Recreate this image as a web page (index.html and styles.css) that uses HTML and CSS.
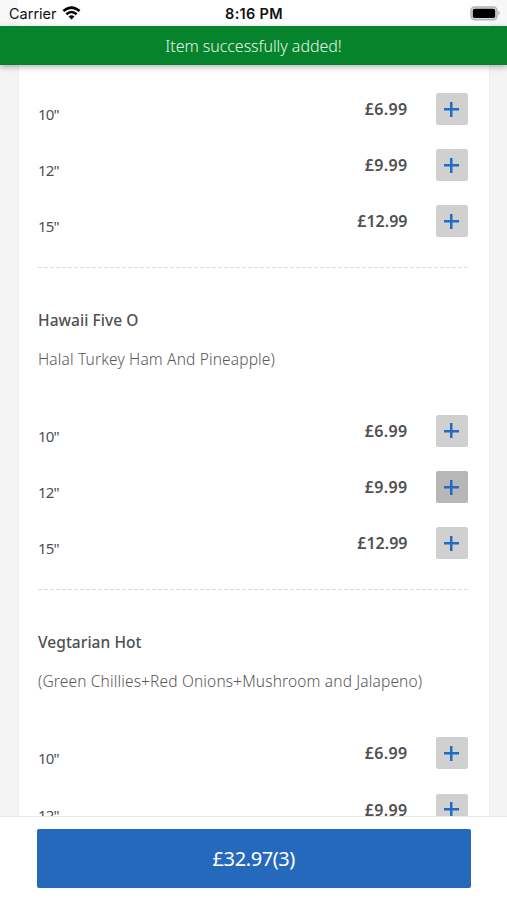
FILE: index.html
```html
<!DOCTYPE html>
<html lang="en">
<head>
<meta charset="utf-8">
<title>Menu</title>
<link rel="stylesheet" href="styles.css">
</head>
<body>
<div class="screen">
  <header class="status">
    <div class="carrier"><span class="carrier-name">Carrier</span>
      <svg class="wifi" viewBox="0 0 20 15"><g fill="none" stroke="#000" stroke-width="2.7"><path d="M1.3 5.4Q10-2 18.7 5.4"/><path d="M4.5 8.8Q10 4 15.5 8.8"/></g><path d="M6.9 11.2Q10 8.6 13.1 11.2L10 14.5Z"/></svg>
    </div>
    <div class="clock">8:16 PM</div>
    <svg class="battery" viewBox="0 0 32 15"><rect x="1" y="1" width="26" height="12.7" rx="3.6" fill="#ddd" stroke="#b4b4b4" stroke-width="1.5"/><rect x="2.8" y="2.7" width="22.4" height="9.3" rx="1.8"/><path d="M28.5 4.8Q31 7.2 28.5 9.6Z" fill="#aaa"/></svg>
  </header>
  <div class="toast"><span>Item successfully added!</span></div>
  <main class="content">
    <div class="card">
      <section class="item first">
        <div class="row"><span class="size">10"</span><span class="price">£6.99</span><button class="add"></button></div>
        <div class="row"><span class="size">12"</span><span class="price">£9.99</span><button class="add"></button></div>
        <div class="row"><span class="size">15"</span><span class="price long">£12.99</span><button class="add"></button></div>
      </section>
      <section class="item">
        <h2 class="name">Hawaii Five O</h2>
        <p class="desc">Halal Turkey Ham And Pineapple)</p>
        <div class="row"><span class="size">10"</span><span class="price">£6.99</span><button class="add"></button></div>
        <div class="row"><span class="size">12"</span><span class="price">£9.99</span><button class="add pressed"></button></div>
        <div class="row"><span class="size">15"</span><span class="price long">£12.99</span><button class="add"></button></div>
      </section>
      <section class="item">
        <h2 class="name">Vegtarian Hot</h2>
        <p class="desc">(Green Chillies+Red Onions+Mushroom and Jalapeno)</p>
        <div class="row"><span class="size">10"</span><span class="price">£6.99</span><button class="add"></button></div>
        <div class="row"><span class="size">12"</span><span class="price">£9.99</span><button class="add"></button></div>
      </section>
    </div>
  </main>
  <footer class="bar"><button class="checkout">£32.97(3)</button></footer>
</div>
</body>
</html>
```
FILE: styles.css
```css
* { box-sizing: border-box; }
body { margin: 0; font-family: "Noto Sans", sans-serif; color: #505052; }
button { border: 0; padding: 0; font: inherit; }
.screen { height: 900px; display: flex; flex-direction: column; overflow: hidden; background: #fff; }
.status { flex: none; height: 26px; display: grid; grid-template-columns: 1fr auto 1fr; align-items: center; padding: 1px 5px 0 9px; background: linear-gradient(90deg, #f8f8f8 18px, #fff 18px calc(100% - 17px), #f7f7f7 calc(100% - 17px)); font-family: Inter, sans-serif; font-size: 14.5px; color: #111; }
.carrier { display: flex; align-items: center; gap: 5px; }
.wifi { width: 19px; height: 14px; margin-top: -1px; }
.clock { margin-left: -3px; font-weight: 600; letter-spacing: .3px; }
.battery { width: 32px; height: 15px; justify-self: end; }
.toast { flex: none; height: 39px; display: flex; align-items: center; justify-content: center; background: #06842d; color: #e4f6e6; font-size: 16px; letter-spacing: -.05px; font-weight: 325; box-shadow: 0 2px 6px rgba(0,0,0,.3); z-index: 1; }
.content { flex: 1; min-height: 0; overflow: hidden; padding: 0 17px 0 18px; background: #f4f4f4; }
.card { background: #fff; border: solid #efefef; border-width: 0 1px; padding: 0 19px; height: 100%; }
.item { height: 322.4px; padding-top: 42px; background: repeating-linear-gradient(90deg, #dcdcdc 0 4px, transparent 4px 6px) bottom / 100% 1px no-repeat; }
.first { height: 202.5px; padding-top: 16px; }
.name { margin: 0 0 19px; font-size: 15.5px; line-height: 20px; font-weight: 500; letter-spacing: .05px; }
.desc { margin: 0 0 34.4px; font-size: 15.5px; line-height: 20px; font-weight: 325; color: #58585a; white-space: nowrap; letter-spacing: .15px; }
.row { height: 56.2px; display: flex; align-items: center; padding-right: 2.5px; }
.size { flex: 1; padding-top: 10px; font-size: 15px; letter-spacing: -.8px; }
.price { margin-right: 28px; font-size: 16px; font-weight: 600; letter-spacing: .35px; }
.long { letter-spacing: 0; }
.add { width: 32px; height: 32px; border-radius: 2px; background: linear-gradient(#216bc6, #216bc6) center / 15px 2.5px no-repeat, linear-gradient(#216bc6, #216bc6) center / 2.5px 15px no-repeat, #d0d0d0; }
.pressed { background-color: #b7b7b7; }
.bar { flex: none; height: 84px; padding: 12px 36.5px 12px 37px; background: #fff; border-top: 1.5px solid #e6e6e6; }
.checkout { width: 100%; height: 58.5px; border-radius: 2px; background: #2569bd; color: #fff; font-size: 20px; letter-spacing: -.4px; }
```
